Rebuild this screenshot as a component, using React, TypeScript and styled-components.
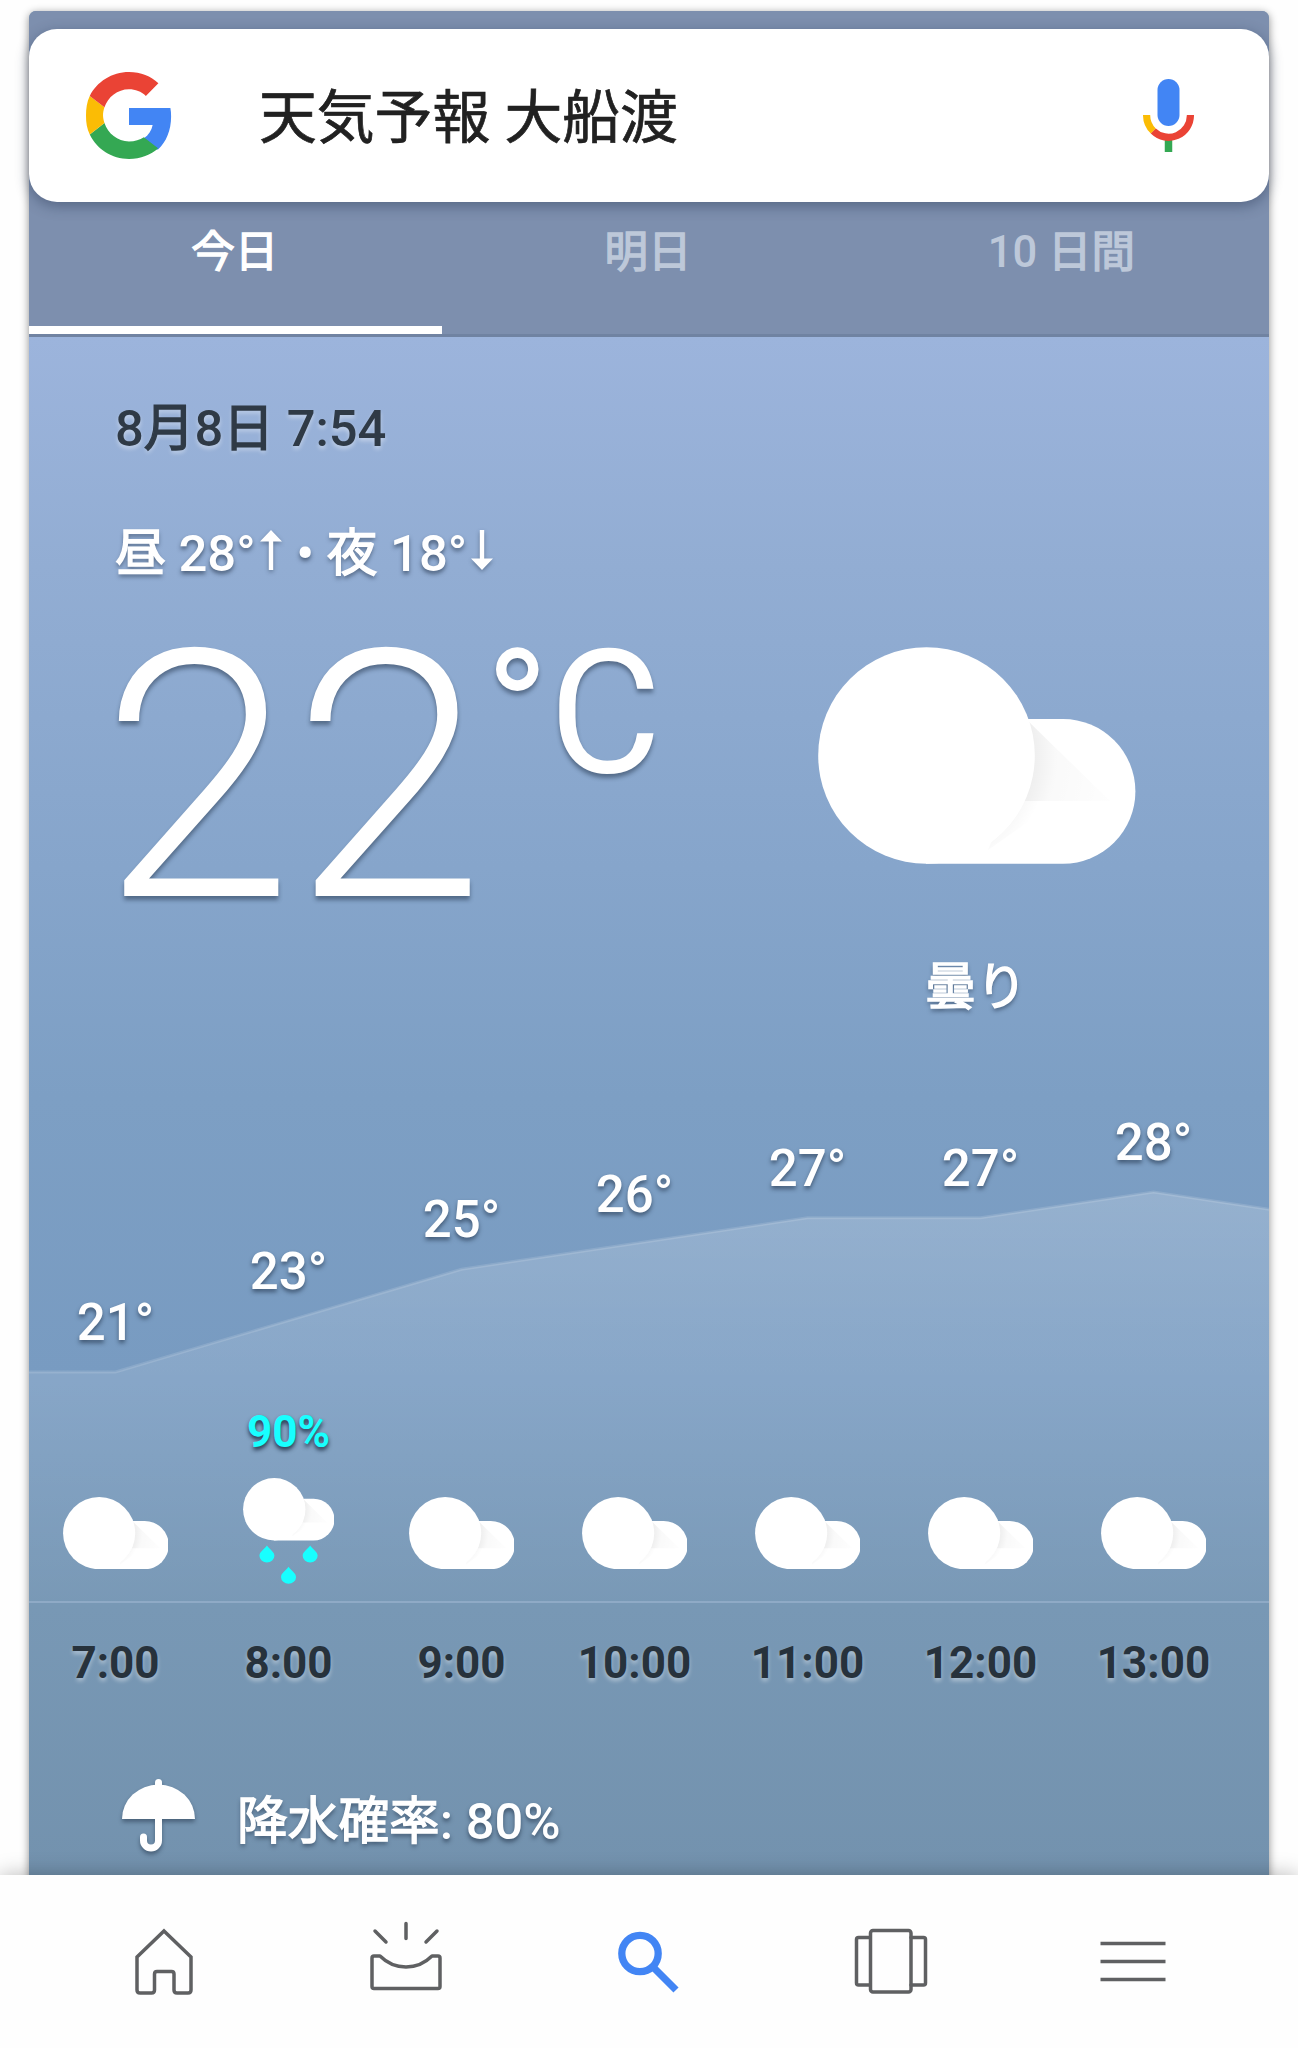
import React from 'react';
import styled, { createGlobalStyle, css } from 'styled-components';

const GlobalStyle = createGlobalStyle`
  *, *::before, *::after { box-sizing: border-box; }
  body {
    margin: 0;
    background: #fefefe;
    font-family: Roboto, "Noto Sans CJK JP", sans-serif;
  }
  svg { display: block; }
`;

const lightShadow = css`text-shadow: 0 3px 4px rgba(20, 35, 55, 0.55);`;
const glowShadow = css`text-shadow: 0 3px 4px rgba(255, 255, 255, 0.4);`;

const Screen = styled.div`
  width: 1298px;
  height: 2048px;
  display: flex;
  flex-direction: column;
  overflow: hidden;
  background: #fefefe;
`;

const Viewport = styled.div`
  height: 1875px;
  flex: none;
  padding: 11px 29px 0;
  overflow: hidden;
`;

const Card = styled.main`
  height: 1900px;
  border-radius: 7px 7px 0 0;
  background: #7595b2;
  box-shadow: 0 2px 8px rgba(0, 0, 0, 0.45);
`;

const Header = styled.header`
  height: 326px;
  padding-top: 18px;
  display: flex;
  flex-direction: column;
  background: #7d8fae;
  border-bottom: 3px solid #7083a2;
  border-radius: 7px 7px 0 0;
`;

const SearchBox = styled.div`
  height: 173px;
  flex: none;
  display: flex;
  align-items: center;
  padding: 0 75px 0 57px;
  border-radius: 28px;
  background: #fff;
  box-shadow: 0 4px 14px rgba(30, 45, 75, 0.42);
`;

const Query = styled.div`
  flex: 1;
  padding: 4px 0 0 87px;
  font-size: 57.8px;
  line-height: 70px;
  color: #212121;
  -webkit-text-stroke: 0.7px #212121;
`;

const Tabs = styled.nav`
  flex: 1;
  display: grid;
  grid-template-columns: repeat(3, 1fr);
`;

const Tab = styled.div<{ $active?: boolean }>`
  padding: 21px 2px 0 0;
  text-align: center;
  font-size: 43.5px;
  font-weight: 500;
  line-height: 60px;
  color: ${(p) => (p.$active ? '#fff' : '#bdc8d9')};
  border-bottom: 8px solid ${(p) => (p.$active ? '#fff' : 'transparent')};
`;

const Kanji = styled.span`
  font-weight: 400;
  -webkit-text-stroke: 1.4px currentColor;
`;

const Body = styled.section`
  height: 1538px;
  background: linear-gradient(180deg, #9cb4dc 0, #92add3 230px, #86a5cb 530px, #7d9fc4 760px, #789bc1 1040px, #7898b5 1270px, #7392ae 1538px);
`;

const Current = styled.div`
  height: 783px;
  display: flex;
`;

const Readings = styled.div`
  width: 789px;
  padding: 62px 0 0 86px;
  color: #fff;
`;

const DateLine = styled.div`
  font-size: 50.7px;
  font-weight: 500;
  line-height: 60px;
  color: #2f3a46;
  white-space: nowrap;
  ${glowShadow}
`;

const RangeLine = styled.div`
  margin-top: 65px;
  display: flex;
  height: 60px;
  font-size: 50.8px;
  font-weight: 500;
  line-height: 60px;
  white-space: pre;
  ${lightShadow}
`;

const ArrowSvg = styled.svg`
  width: 22px;
  height: 40px;
  margin: 6px 2px 0 4px;
  overflow: visible;
  filter: drop-shadow(0 2px 2px rgba(20, 35, 55, 0.4));
`;

const Temperature = styled.div`
  display: flex;
  margin-top: 44px;
  text-shadow: 0 4px 4px rgba(20, 35, 55, 0.45);
`;

const Degrees = styled.div`
  width: 376px;
  margin: 25px 0 0 -14px;
  font-size: 346px;
  font-weight: 300;
  line-height: 250px;
  letter-spacing: -0.5px;
  white-space: nowrap;
`;

const Unit = styled.div`
  margin-left: 8px;
  font-size: 172px;
  line-height: 170px;
  white-space: nowrap;
`;

const Condition = styled.div`
  width: 318px;
  padding-top: 310px;
`;

const ConditionLabel = styled.div`
  margin-top: 94px;
  padding-right: 2px;
  text-align: center;
  font-size: 51px;
  line-height: 60px;
  color: #fff;
  ${lightShadow}
`;

const Hourly = styled.div`
  display: grid;
  height: 483px;
  border-bottom: 2px solid #8faac6;
`;

const Graph = styled.svg`
  grid-area: 1 / 1;
`;

const Hours = styled.div`
  grid-area: 1 / 1;
  display: grid;
  grid-template-columns: repeat(7, 173px);
`;

const Hour = styled.div`
  display: flex;
  flex-direction: column;
  align-items: center;
`;

const HourTemp = styled.div<{ $top: number }>`
  margin-top: ${(p) => p.$top}px;
  font-size: 51px;
  font-weight: 500;
  line-height: 50px;
  color: #fff;
  ${lightShadow}
`;

const HourRain = styled.div`
  margin-top: auto;
  height: 52px;
  font-size: 44px;
  font-weight: 700;
  line-height: 50px;
  color: #18ffff;
  text-shadow: 0 3px 4px rgba(10, 25, 45, 0.8);
`;

const HourIcon = styled.div<{ $rain?: boolean }>`
  height: 142px;
  padding-top: ${(p) => (p.$rain ? 19 : 38)}px;
`;

const Times = styled.div`
  display: grid;
  grid-template-columns: repeat(7, 173px);
  padding-top: 30px;
  height: 125px;
`;

const Time = styled.div`
  text-align: center;
  font-size: 44px;
  font-weight: 700;
  line-height: 60px;
  color: #27323c;
  ${glowShadow}
`;

const Precipitation = styled.div`
  display: flex;
  padding: 51px 0 0 93px;
  color: #fff;
  font-size: 50.7px;
  font-weight: 500;
  line-height: 60px;
  ${lightShadow}
  svg { filter: drop-shadow(0 3px 2px rgba(20, 35, 55, 0.45)); }
`;

const PrecipitationText = styled.span`
  padding: 13px 0 0 42px;
`;

const BottomBar = styled.nav`
  flex: 1;
  display: grid;
  grid-template-columns: repeat(5, 242.2px);
  padding-left: 43px;
  background: #fefefe;
  box-shadow: 0 0 20px rgba(0, 0, 0, 0.28);
  z-index: 1;
`;

const BarItem = styled.div`
  display: flex;
  justify-content: center;
  padding-top: 44px;
`;

const GoogleLogo = () => (
  <svg width="86" height="87" viewBox="0 0 48 48" preserveAspectRatio="none">
    <path fill="#4285F4" d="M47.500 24.500c0-1.600-.1-3.100-.4-4.600H24v9.400h13.200c-.6 3-2.300 5.600-4.900 7.300v6.100h7.900c4.600-4.200 7.300-10.500 7.300-18.200z" />
    <path fill="#34A853" d="M24 48c6.600 0 12.200-2.200 16.200-5.900l-7.900-6.100c-2.200 1.500-5 2.300-8.300 2.300-6.400 0-11.800-4.300-13.700-10.100L2.100 34.500C6.100 42.600 14.400 48 24 48z" />
    <path fill="#FBBC05" d="M10.300 28.200c-.5-1.500-.8-3-.8-4.300s.3-3 .8-4.400L2.100 13.200C.5 16.500 0 20.100 0 24s.5 7.300 2.100 10.500z" />
    <path fill="#EA4335" d="M24 9.500c3.600 0 6.800 1.200 9.400 3.700l7-7C36.200 2.300 30.600 0 24 0 14.400 0 6.100 5.400 2.100 13.200L10.300 19.500C12.200 13.800 17.600 9.500 24 9.500z" />
  </svg>
);

const MicIcon = () => (
  <svg width="51" height="73" viewBox="0 0 51 73" fill="none">
    <rect x="14.500" y="0" width="22" height="47" rx="11" fill="#4285F4" />
    <path d="M25.500 60v13" stroke="#34A853" strokeWidth="7.500" />
    <path d="M3.600 36A22 22 0 0 0 10.300 52" stroke="#FBBC05" strokeWidth="7.200" />
    <path d="M10.300 52A21.800 21.800 0 0 0 47.400 36" stroke="#EA4335" strokeWidth="7.200" />
  </svg>
);

const Arrow = ({ down }: { down?: boolean }) => (
  <ArrowSvg viewBox="0 0 22 40">
    <path d={down ? 'M11 40L22 28.500H13.200V0H8.800V28.500H0z' : 'M11 0L22 11.500H13.200V40H8.800V11.500H0z'} fill="#fff" />
  </ArrowSvg>
);

type CloudProps = { id: string; width: number; rain?: boolean };

const CloudIcon = ({ id, width, rain }: CloudProps) => {
  const h = rain ? 370 : 217;
  return (
    <svg width={width} height={(width * h) / 317.500} viewBox={`0 0 317.5 ${h}`}>
      <defs>
        <radialGradient id={`${id}-shade`} cx="108.500" cy="108.500" r="185" gradientUnits="userSpaceOnUse">
          <stop offset="0.58" stopColor="#000" stopOpacity="0.065" />
          <stop offset="0.7" stopColor="#000" stopOpacity="0.022" />
          <stop offset="1" stopColor="#000" stopOpacity="0.006" />
        </radialGradient>
        <radialGradient id={`${id}-soft`} cx="108.500" cy="108.500" r="122" gradientUnits="userSpaceOnUse">
          <stop offset="0.88" stopColor="#000" stopOpacity="0.025" />
          <stop offset="1" stopColor="#000" stopOpacity="0" />
        </radialGradient>
      </defs>
      <path d="M108 72H245A72.400 72.400 0 0 1 245 216.800H108z" fill="#fff" />
      <path d="M208 72L292 154H190L180 100z" fill={`url(#${id}-shade)`} />
      <path d="M190 154H240L170 203z" fill={`url(#${id}-soft)`} />
      <circle cx="108.500" cy="108.500" r="108.300" fill="#fff" />
      {rain &&
        [[83, 234], [233, 234], [158, 308]].map(([x, y]) => (
          <path
            key={x}
            transform={`translate(${x} ${y})`}
            d="M0 0C10 14 26 22 26 36A26 23 0 0 1-26 36C-26 22-10 14 0 0z"
            fill="#18ffff"
          />
        ))}
    </svg>
  );
};

const UmbrellaIcon = () => (
  <svg width="73" height="73" viewBox="0 0 73 73" fill="none" overflow="visible">
    <path d="M0 40A36.500 34.500 0 0 1 73 40z" fill="#fff" />
    <path d="M36.500 10V3.500" stroke="#fff" strokeWidth="7" strokeLinecap="round" />
    <path d="M36.500 38V61.500A7.500 7.500 0 0 1 21.500 61.500V58" stroke="#fff" strokeWidth="7" strokeLinecap="round" />
  </svg>
);

const line = { fill: 'none', stroke: '#5f6062', strokeWidth: 3.500, strokeLinejoin: 'round', strokeLinecap: 'round' } as const;

const HomeIcon = () => (
  <svg width="60" height="84" viewBox="0 0 60 84" {...line}>
    <path d="M30 12L57 38V71Q57 74 54 74H43Q40 74 40 71V55Q40 52.500 37.500 52.500H23Q20.500 52.500 20.500 55V71Q20.500 74 17.500 74H6Q3 74 3 71V38z" strokeLinejoin="miter" />
  </svg>
);

const UpdatesIcon = () => (
  <svg width="74" height="84" viewBox="0 0 74 84" {...line}>
    <path d="M37 4.500V19.500M6 12L17 23M68 12L57 23" />
    <path d="M5 37H11Q22 48 37 48T63 37H69Q71 37 71 39V67.500Q71 69.500 69 69.500H5Q3 69.500 3 67.500V39Q3 37 5 37z" />
  </svg>
);

const SearchIcon = () => (
  <svg width="61" height="84" viewBox="0 0 61 84" fill="none" stroke="#4285F4">
    <circle cx="22" cy="34.500" r="18.200" strokeWidth="7.300" />
    <path d="M35 48L58 71" strokeWidth="7.300" />
  </svg>
);

const RecentIcon = () => (
  <svg width="74" height="84" viewBox="0 0 74 84" {...line}>
    <path d="M15 18.500H4.500Q2.500 18.500 2.500 20.500V64Q2.500 66 4.500 66H15M57 18.500H69.500Q71.500 18.500 71.500 20.500V64Q71.500 66 69.500 66H57" />
    <rect x="16.500" y="11.500" width="40.500" height="61.500" rx="2.500" />
  </svg>
);

const MenuIcon = () => (
  <svg width="66" height="84" viewBox="0 0 66 84" {...line}>
    <path d="M0.500 24.500H65.500M0.500 42.500H65.500M0.500 60.500H65.500" strokeLinecap="butt" />
  </svg>
);

const COLUMN = 173;
const hours = [
  { time: '7:00', temp: 21 },
  { time: '8:00', temp: 23, rain: '90%' },
  { time: '9:00', temp: 25 },
  { time: '10:00', temp: 26 },
  { time: '11:00', temp: 27 },
  { time: '12:00', temp: 27 },
  { time: '13:00', temp: 28 },
];

const tempY = (t: number) => 252 - (t - 21) * 25.700;

const TemperatureGraph = () => {
  const points = [...hours.map((h) => h.temp), 27].map((t, i) => `L${86.500 + i * COLUMN} ${tempY(t)}`);
  const edge = `M-2 ${tempY(21)}${points.join('')}`;
  return (
    <Graph width="1240" height="481" viewBox="0 0 1240 481">
      <defs>
        <linearGradient id="area" x1="0" y1="72" x2="0" y2="480" gradientUnits="userSpaceOnUse">
          <stop offset="0" stopColor="#fff" stopOpacity="0.2" />
          <stop offset="1" stopColor="#fff" stopOpacity="0.01" />
        </linearGradient>
      </defs>
      <path d={`${edge}V483H-2z`} fill="url(#area)" />
      <path d={edge} fill="none" stroke="#fff" strokeOpacity="0.13" strokeWidth="3" />
    </Graph>
  );
};

export default function App() {
  return (
    <>
      <GlobalStyle />
      <Screen>
        <Viewport>
          <Card>
            <Header>
              <SearchBox>
                <GoogleLogo />
                <Query>天気予報 大船渡</Query>
                <MicIcon />
              </SearchBox>
              <Tabs>
                <Tab $active><Kanji>今日</Kanji></Tab>
                <Tab><Kanji>明日</Kanji></Tab>
                <Tab>10 <Kanji>日間</Kanji></Tab>
              </Tabs>
            </Header>
            <Body>
              <Current>
                <Readings>
                  <DateLine>8<Kanji>月</Kanji>8<Kanji>日</Kanji> 7:54</DateLine>
                  <RangeLine>
                    <span><Kanji>昼</Kanji> 28°</span>
                    <Arrow />
                    <span> • <Kanji>夜</Kanji> 18°</span>
                    <Arrow down />
                  </RangeLine>
                  <Temperature>
                    <Degrees>22</Degrees>
                    <Unit>°C</Unit>
                  </Temperature>
                </Readings>
                <Condition>
                  <CloudIcon id="now" width={317.500} />
                  <ConditionLabel><Kanji>曇り</Kanji></ConditionLabel>
                </Condition>
              </Current>
              <Hourly>
                <TemperatureGraph />
                <Hours>
                  {hours.map((h) => (
                    <Hour key={h.time}>
                      <HourTemp $top={tempY(h.temp) - 74}>{h.temp}°</HourTemp>
                      <HourRain>{h.rain}</HourRain>
                      <HourIcon $rain={!!h.rain}>
                        <CloudIcon id={`h${h.time.replace(':', '')}`} width={h.rain ? 91.500 : 105.800} rain={!!h.rain} />
                      </HourIcon>
                    </Hour>
                  ))}
                </Hours>
              </Hourly>
              <Times>
                {hours.map((h) => (
                  <Time key={h.time}>{h.time}</Time>
                ))}
              </Times>
              <Precipitation>
                <UmbrellaIcon />
                <PrecipitationText><Kanji>降水確率</Kanji>: 80%</PrecipitationText>
              </Precipitation>
            </Body>
          </Card>
        </Viewport>
        <BottomBar>
          <BarItem><HomeIcon /></BarItem>
          <BarItem><UpdatesIcon /></BarItem>
          <BarItem><SearchIcon /></BarItem>
          <BarItem><RecentIcon /></BarItem>
          <BarItem><MenuIcon /></BarItem>
        </BottomBar>
      </Screen>
    </>
  );
}
